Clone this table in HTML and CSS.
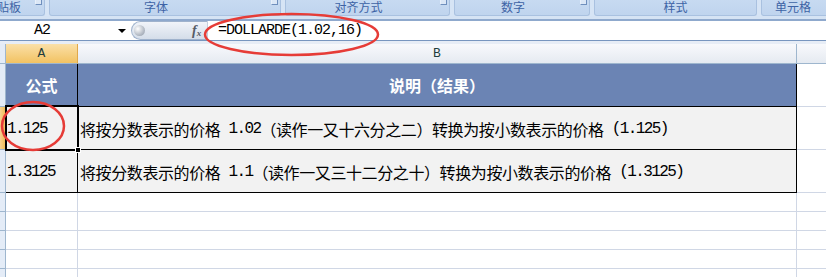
FILE: index.html
```html
<!DOCTYPE html>
<html lang="zh">
<head>
<meta charset="utf-8">
<title>DOLLARDE</title>
<link rel="stylesheet" href="styles.css">
</head>
<body>
<div class="page">
  <div class="ribbon">
    <div class="grp g1"><span class="lbl">剪贴板</span><i class="launch"></i></div>
    <div class="grp g2"><span class="lbl">字体</span><i class="launch"></i></div>
    <div class="grp g3"><span class="lbl">对齐方式</span><i class="launch"></i></div>
    <div class="grp g4"><span class="lbl">数字</span><i class="launch"></i></div>
    <div class="grp g5"><span class="lbl">样式</span></div>
    <div class="grp g6"><span class="lbl">单元格</span></div>
  </div>
  <div class="band"></div>
  <div class="fbar">
    <div class="namebox"><span class="nm">A2</span><i class="arrow"></i></div>
    <div class="pill"><i class="knob"></i><span class="fx">f<sub>x</sub></span></div>
    <div class="finput">=DOLLARDE(1.02,16)</div>
  </div>
  <div class="gap"></div>
  <div class="sheet">
    <div class="ch corner"></div>
    <div class="ch cha">A</div>
    <div class="ch chb">B</div>
    <div class="ch chc"></div>

    <div class="rh"></div>
    <div class="c hd a">公式</div>
    <div class="c hd b">说明（结果）</div>
    <div class="c rest"></div>

    <div class="rh sel"></div>
    <div class="c dt a active"><span class="m">1.125</span><i class="handle"></i></div>
    <div class="c dt b">将按分数表示的价格<span class="m"> 1.02</span>（读作一又十六分之二）转换为按小数表示的价格<span class="m"> (1.125)</span></div>
    <div class="c rest"></div>

    <div class="rh"></div>
    <div class="c dt a"><span class="m">1.3125</span></div>
    <div class="c dt b">将按分数表示的价格<span class="m"> 1.1</span>（读作一又三十二分之十）转换为按小数表示的价格<span class="m"> (1.3125)</span></div>
    <div class="c rest"></div>

    <div class="rh e"></div><div class="c em a"></div><div class="c em b"></div><div class="c em rest2"></div>
    <div class="rh e"></div><div class="c em a"></div><div class="c em b"></div><div class="c em rest2"></div>
    <div class="rh e"></div><div class="c em a"></div><div class="c em b"></div><div class="c em rest2"></div>
    <div class="rh e"></div><div class="c em a"></div><div class="c em b"></div><div class="c em rest2"></div>
    <div class="rh e"></div><div class="c em a"></div><div class="c em b"></div><div class="c em rest2"></div>
  </div>
  <svg class="marks" width="826" height="277" viewBox="0 0 826 277">
    <ellipse cx="291.5" cy="34.5" rx="86.5" ry="20.5" fill="none" stroke="#e63c37" stroke-width="2.5"/>
    <ellipse cx="33" cy="126" rx="31" ry="24" fill="none" stroke="#e63c37" stroke-width="2.5"/>
  </svg>
</div>
</body>
</html>
```

FILE: styles.css
```css
* { box-sizing: border-box; }
html, body { margin: 0; padding: 0; background: #ffffff; }
body { width: 826px; height: 277px; overflow: hidden; font-family: "Noto Sans CJK SC", sans-serif; }
.page { position: relative; width: 826px; height: 277px; overflow: hidden; }

/* ribbon */
.ribbon { display: flex; gap: 4px; height: 16px; background: #d6e4f5; }
.grp {
  position: relative; flex-shrink: 0; height: 16px; display: flex; justify-content: center;
  background: linear-gradient(#c7daf1, #bfd4ee);
  border: 1px solid #a9c1e0; border-top: none; border-radius: 0 0 3px 3px;
  padding-right: 18px;
}
.g1 { width: 47px; margin-left: -2px; justify-content: flex-start; }
.g1 .lbl { margin-left: -14px; }
.g2 { width: 232px; }
.g3 { width: 165px; }
.g4 { width: 136px; }
.g5 { width: 163px; padding-right: 0; }
.g6 { width: 70px; padding-right: 6px; }
.lbl { font-size: 12px; line-height: 14px; color: #3d63a5; white-space: nowrap; }
.launch {
  position: absolute; right: 2px; top: -2px; width: 7px; height: 7px;
  border: 1px solid #6f8fbd; border-top: none; border-left-color: #e8f0fa; background: #dbe7f6;
}
.band { height: 5px; background: #d5e3f4; border-bottom: 2px solid #8fa9cd; }

/* formula bar */
.fbar { display: flex; height: 19px; background: #ffffff; }
.namebox { position: relative; width: 131px; display: flex; align-items: center; }
.nm { font-family: "Liberation Mono", monospace; font-size: 15px; letter-spacing: -1px; padding-left: 34px; color: #000; }
.arrow {
  position: absolute; left: 118px; top: 8px; width: 0; height: 0;
  border-left: 4px solid transparent; border-right: 4px solid transparent; border-top: 4px solid #000;
}
.pill {
  position: relative; width: 77px; height: 19px;
  border: 1px solid #9fb2cc; border-right: 1px solid #c4d0e0; border-radius: 10px 0 0 10px;
  background: linear-gradient(#f1f4f9, #d4dde9);
}
.knob {
  position: absolute; left: 2px; top: 3px; width: 11px; height: 11px; border-radius: 50%;
  background: radial-gradient(circle at 35% 35%, #ffffff, #b5bcc6 60%, #8d96a3);
}
.fx {
  position: absolute; left: 60px; top: 0px; font-family: "Liberation Serif", serif;
  font-style: italic; font-weight: bold; font-size: 14px; line-height: 17px; color: #555b66;
}
.fx sub { font-size: 9px; vertical-align: -1px; }
.finput {
  flex: 1; padding-left: 10px; font-family: "Liberation Mono", monospace; font-size: 15px;
  letter-spacing: -1px; line-height: 19px; color: #000;
}
.gap { height: 4px; border-top: 1px solid #7896bf; background: #e7edf6; }

/* sheet */
.sheet {
  display: grid;
  grid-template-columns: 6px 72px 719px 1fr;
  grid-template-rows: 20px 43px 43px 43px repeat(5, 19px);
}
.ch {
  border-bottom: 1px solid #9eb6ce; border-right: 1px solid #b8c9dc;
  background: linear-gradient(#f8f9fc, #e5eaf1);
  font-family: "Liberation Mono", monospace; font-size: 13px; color: #1f3d3d;
  display: flex; align-items: center; justify-content: center; line-height: 19px;
}
.ch.corner { background: #e4ecf7; border-right: 1px solid #9eb6ce; }
.ch.cha { background: linear-gradient(#fae0a8, #f2c262); border-right: 1px solid #e0a84a; }
.ch.chb { border-right: 1px solid #9eb6ce; }
.ch.chc { border-right: none; }

.rh { background: #e4ecf7; border-right: 1px solid #9eb6ce; border-bottom: 1px solid #9eb6ce; }
.rh.sel { background: linear-gradient(90deg, #f7d290, #f0bd59); border-right-color: #e0a84a; }
.c { display: flex; align-items: center; }
.hd {
  background: #6b84b4; color: #ffffff; font-weight: bold; font-size: 16px;
  justify-content: center; border-right: 1px solid #000; border-bottom: 1px solid #000;
}
.dt {
  background: #f2f2f2; color: #000; font-size: 16px; letter-spacing: -0.4px;
  border-right: 1px solid #000; border-bottom: 1px solid #000; white-space: pre;
  padding-left: 2px; padding-top: 1px;
}
.dt.a { padding-left: 1px; }
.m { font-family: "Liberation Mono", monospace; font-size: 16px; letter-spacing: -1.6px; vertical-align: 1px; }
.rest { border-bottom: 1px solid #d0d7e5; }
.em { border-right: 1px solid #d0d7e5; border-bottom: 1px solid #d0d7e5; }
.em.rest2 { border-right: none; }

.active { position: relative; }
.active::before {
  content: ""; position: absolute; left: -1px; top: -2px; right: -2px; bottom: -2px;
  border: 2px solid #000;
}
.handle {
  position: absolute; right: -4px; bottom: -4px; width: 6px; height: 6px;
  background: #000; border: 1px solid #fff; z-index: 2;
}
.marks { position: absolute; left: 0; top: 0; pointer-events: none; }
```
